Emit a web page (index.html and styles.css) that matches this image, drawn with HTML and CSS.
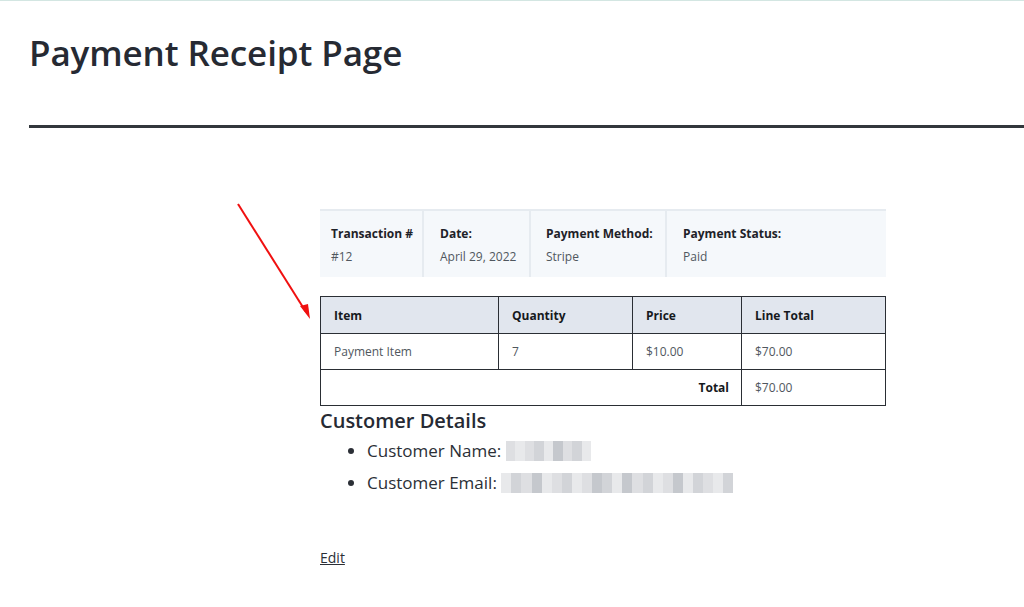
FILE: index.html
```html
<!DOCTYPE html>
<html>
<head>
<meta charset="utf-8">
<link rel="stylesheet" href="styles.css">
</head>
<body>
<div class="topline"></div>
<header class="page-head">
  <h1>Payment Receipt Page</h1>
</header>
<hr class="rule">
<main class="receipt">
  <div class="summary">
    <div class="cell c1"><div class="lbl">Transaction #</div><div class="val">#12</div></div>
    <div class="cell c2"><div class="lbl">Date:</div><div class="val">April 29, 2022</div></div>
    <div class="cell c3"><div class="lbl">Payment Method:</div><div class="val">Stripe</div></div>
    <div class="cell c4"><div class="lbl">Payment Status:</div><div class="val">Paid</div></div>
  </div>
  <table class="items">
    <thead>
      <tr><th class="w1">Item</th><th class="w2">Quantity</th><th class="w3">Price</th><th class="w4">Line Total</th></tr>
    </thead>
    <tbody>
      <tr><td>Payment Item</td><td>7</td><td>$10.00</td><td>$70.00</td></tr>
      <tr><td colspan="3" class="total-lbl">Total</td><td>$70.00</td></tr>
    </tbody>
  </table>
  <h2>Customer Details</h2>
  <ul class="cust">
    <li>Customer Name: <span class="pix pix-name"><i class="a"></i><i class="b"></i><i class="a"></i><i class="c"></i><i class="b"></i><i class="d"></i><i class="a"></i><i class="c"></i><i class="b"></i></span></li>
    <li>Customer Email: <span class="pix pix-email"><i class="b"></i><i class="c"></i><i class="a"></i><i class="d"></i><i class="b"></i><i class="a"></i><i class="c"></i><i class="b"></i><i class="a"></i><i class="d"></i><i class="c"></i><i class="b"></i><i class="d"></i><i class="a"></i><i class="c"></i><i class="b"></i><i class="a"></i><i class="d"></i><i class="b"></i><i class="c"></i><i class="a"></i><i class="b"></i><i class="c"></i></span></li>
  </ul>
  <p class="edit"><a href="#">Edit</a></p>
</main>
<svg class="arrow" width="90" height="130" viewBox="0 0 90 130">
  <line x1="2" y1="2" x2="70" y2="110" stroke="#f01010" stroke-width="2"/>
  <polygon points="74,117 64,104 72,102" fill="#f01010"/>
</svg>
</body>
</html>
```
FILE: styles.css
```css
* { box-sizing: border-box; }
html, body { margin: 0; padding: 0; background: #fff; }
body {
  font-family: "Open Sans", "Noto Sans", sans-serif;
  color: #2b2f36;
  width: 1024px;
  height: 607px;
  overflow: hidden;
  position: relative;
}
.topline { height: 1px; background: #d3e6e2; }
.page-head { padding: 29px 0 0 29px; height: 97px; }
.page-head h1 {
  margin: 0;
  font-size: 35px;
  font-weight: 600;
  line-height: 46px;
  color: #262a33;
  letter-spacing: -0.1px;
}
.rule {
  margin: 27px 0 0 29px;
  border: 0;
  height: 3px;
  background: #32373c;
}
.receipt { width: 566px; margin: 81px 0 0 320px; }
.summary {
  display: flex;
  background: #f5f8fb;
  border-top: 2px solid #e6ebf0;
  height: 68px;
}
.cell { padding: 14px 0 0 11px; border-right: 2px solid #e6ebf0; }
.cell:last-child { border-right: 0; }
.c1 { width: 104px; }
.c2 { width: 107px; padding-left: 16px; }
.c3 { width: 136px; padding-left: 15px; }
.c4 { flex: 1; padding-left: 16px; }
.lbl { font-size: 12px; font-weight: 700; color: #1e2228; line-height: 17px; }
.val { font-size: 12px; color: #50575e; line-height: 17px; margin-top: 6px; }
.items {
  margin-top: 19px;
  width: 566px;
  border-collapse: collapse;
  font-size: 12px;
}
.items th, .items td {
  border: 1px solid #2a2e34;
  height: 36px;
  text-align: left;
  padding: 0 13px;
}
.items th { background: #e1e6ee; font-weight: 700; color: #16191d; height: 37px; }
.items td { color: #50575e; }
.w1 { width: 178px; }
.w2 { width: 134px; }
.w3 { width: 109px; }
.items td.total-lbl { text-align: right; font-weight: 700; color: #16191d; padding-right: 12px; }
h2 {
  margin: 1px 0 0;
  font-size: 20px;
  font-weight: 600;
  line-height: 27px;
  color: #262a33;
}
.cust {
  margin: 1px 0 0;
  padding-left: 47px;
  font-size: 17px;
  line-height: 32px;
  color: #2b2f36;
}
.pix { display: inline-flex; flex-wrap: wrap; vertical-align: middle; height: 20px; margin-top: -3px; }
.pix i { display: block; width: 10px; height: 20px; }
.pix-name i { width: 9.5px; }
.pix-email i { width: 10.1px; }
.pix .a { background: #dedfe2; }
.pix .b { background: #e8e9eb; }
.pix .c { background: #d2d4d8; }
.pix .d { background: #c5c8cd; }
.edit { margin: 49px 0 0; font-size: 14px; }
.edit a { color: #2b2f36; text-decoration: underline; }
.arrow { position: absolute; left: 236px; top: 202px; }
```
